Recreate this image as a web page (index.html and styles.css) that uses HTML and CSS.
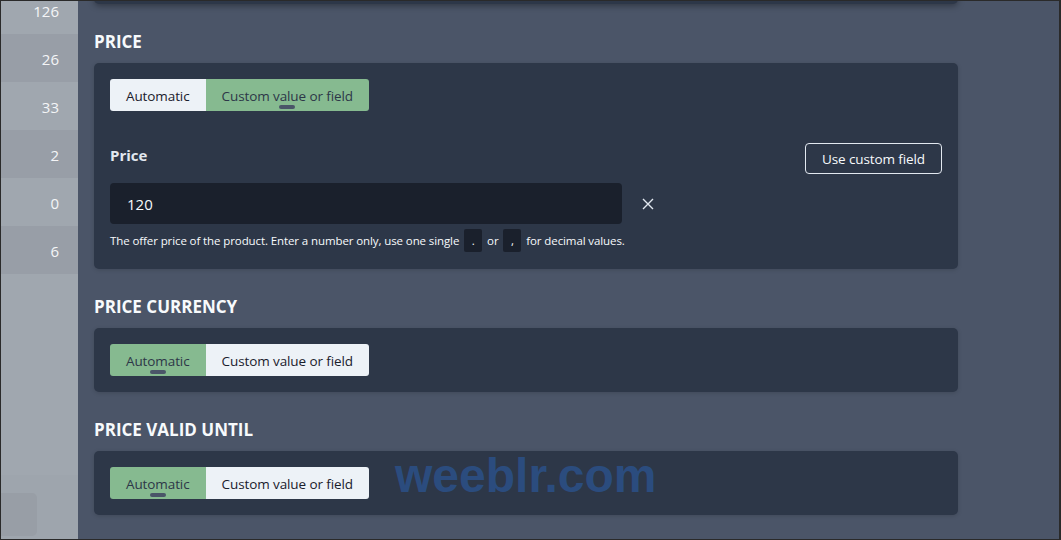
FILE: index.html
```html
<!DOCTYPE html>
<html lang="en">
<head>
    <meta charset="UTF-8">
    <meta name="viewport" content="width=device-width, initial-scale=1.0">
    <title>Structured data - Price</title>
    <link rel="stylesheet" href="styles.css">
</head>
<body>
    <div class="frame">
        <aside class="stats">
            <div class="stat">126</div>
            <div class="stat stat-alt">26</div>
            <div class="stat">33</div>
            <div class="stat stat-alt">2</div>
            <div class="stat">0</div>
            <div class="stat stat-alt">6</div>
            <div class="stats-fill"></div>
            <div class="stats-foot">
                <div class="stats-chip"></div>
            </div>
        </aside>

        <main class="content">
            <div class="card card-prev"></div>

            <section class="field">
                <h2 class="field-title">PRICE</h2>
                <div class="card">
                    <div class="toggle">
                        <button class="toggle-opt">Automatic</button>
                        <button class="toggle-opt active">Custom value or field</button>
                    </div>

                    <div class="field-row">
                        <label class="field-label">Price</label>
                        <button class="btn-outline">Use custom field</button>
                    </div>

                    <div class="input-row">
                        <div class="input">120</div>
                        <span class="clear">
                            <svg width="12" height="12" viewBox="0 0 12 12">
                                <path d="M1 1 L11 11 M11 1 L1 11" stroke="#e2e8f0" stroke-width="1.4" fill="none"/>
                            </svg>
                        </span>
                    </div>

                    <p class="help">The offer price of the product. Enter a number only, use one single <code>.</code> or <code>,</code> for decimal values.</p>
                </div>
            </section>

            <section class="field">
                <h2 class="field-title">PRICE CURRENCY</h2>
                <div class="card">
                    <div class="toggle">
                        <button class="toggle-opt active">Automatic</button>
                        <button class="toggle-opt">Custom value or field</button>
                    </div>
                </div>
            </section>

            <section class="field">
                <h2 class="field-title">PRICE VALID UNTIL</h2>
                <div class="card">
                    <div class="toggle">
                        <button class="toggle-opt active">Automatic</button>
                        <button class="toggle-opt">Custom value or field</button>
                    </div>
                </div>
            </section>

            <div class="watermark">weeblr.com</div>
        </main>
    </div>
</body>
</html>
```

FILE: styles.css
```css
body {
    margin: 0;
    font-family: "Open Sans", "Noto Sans", Arial, sans-serif;
    background-color: #4a5568;
    color: #f7fafc;
}

.frame {
    display: flex;
    height: 540px;
    box-sizing: border-box;
    border: 1px solid #2a2a2a;
    border-right-width: 2px;
    overflow: hidden;
    background-color: #4b5568;
}

/* colonne de gauche */
.stats {
    width: 77px;
    flex-shrink: 0;
    display: flex;
    flex-direction: column;
    background-color: #a0a7af;
    overflow: hidden;
}

.stat {
    height: 48px;
    flex-shrink: 0;
    display: flex;
    align-items: center;
    justify-content: flex-end;
    padding-right: 19px;
    padding-top: 1px;
    box-sizing: border-box;
    font-size: 15px;
    color: #f4f5f7;
    background-color: #a0a7af;
}

.stat:first-child {
    margin-top: -15px;
}

.stat-alt {
    background-color: #989ea7;
}

.stats-fill {
    flex: 1;
}

.stats-foot {
    height: 64px;
    flex-shrink: 0;
    background-color: #9ea5ad;
    padding-top: 18px;
    box-sizing: border-box;
}

.stats-chip {
    width: 36px;
    height: 43px;
    background-color: #989ea6;
    border-radius: 0 5px 5px 0;
}

/* contenu */
.content {
    flex: 1;
    padding-left: 16px;
    position: relative;
}

.card {
    width: 864px;
    box-sizing: border-box;
    background-color: #2d3748;
    border-radius: 5px;
    padding: 16px;
    box-shadow: 0 1px 4px rgba(0, 0, 0, 0.15);
}

.card-prev {
    height: 40px;
    margin-top: -37px;
    box-shadow: 0 2px 6px rgba(0, 0, 0, 0.35);
}

.field {
    margin-top: 26px;
}

.field-title {
    margin: 0 0 9px;
    font-size: 17px;
    line-height: 24px;
    font-weight: 700;
    color: #f7fafc;
}

.toggle {
    display: inline-flex;
    height: 32px;
    border-radius: 3px;
    overflow: hidden;
}

.toggle-opt {
    position: relative;
    border: none;
    margin: 0;
    padding: 1px 16px 0;
    font-family: inherit;
    font-size: 13.5px;
    letter-spacing: -0.1px;
    color: #1a202c;
    background-color: #edf2f7;
    cursor: pointer;
}

.toggle-opt.active {
    background-color: #86ba90;
    color: #2d3748;
}

.toggle-opt.active::after {
    content: "";
    position: absolute;
    left: 50%;
    bottom: 2px;
    width: 16px;
    height: 4px;
    margin-left: -8px;
    border-radius: 2px;
    background-color: #4a5568;
}

.field-row {
    display: flex;
    justify-content: space-between;
    align-items: flex-start;
    margin-top: 32px;
}

.field-label {
    font-size: 15px;
    font-weight: 700;
    line-height: 24px;
    color: #e2e8f0;
}

.btn-outline {
    height: 31px;
    padding: 0 16px;
    border: 1px solid #e2e8f0;
    border-radius: 4px;
    background: transparent;
    color: #f7fafc;
    font-family: inherit;
    font-size: 13.5px;
    letter-spacing: -0.1px;
    cursor: pointer;
}

.input-row {
    display: flex;
    align-items: center;
    margin-top: 9px;
}

.input {
    width: 512px;
    height: 41px;
    box-sizing: border-box;
    padding: 0 17px;
    display: flex;
    align-items: center;
    background-color: #1a202c;
    border-radius: 4px;
    font-size: 15px;
    color: #f7fafc;
}

.clear {
    display: flex;
    margin-left: 20px;
}

.help {
    margin: 5px 0 0;
    font-size: 11.5px;
    letter-spacing: -0.1px;
    line-height: 24px;
    color: #f7fafc;
}

.help code {
    display: inline-block;
    min-width: 18px;
    box-sizing: border-box;
    padding: 0 6px;
    margin: 0 2px;
    text-align: center;
    font-family: inherit;
    line-height: 23px;
    background-color: #1a202c;
    border-radius: 2px;
}

.watermark {
    position: absolute;
    left: 317px;
    top: 447px;
    font-family: "Liberation Sans", Arial, sans-serif;
    font-weight: 700;
    font-size: 48px;
    color: #2b4c7e;
    pointer-events: none;
}
```
